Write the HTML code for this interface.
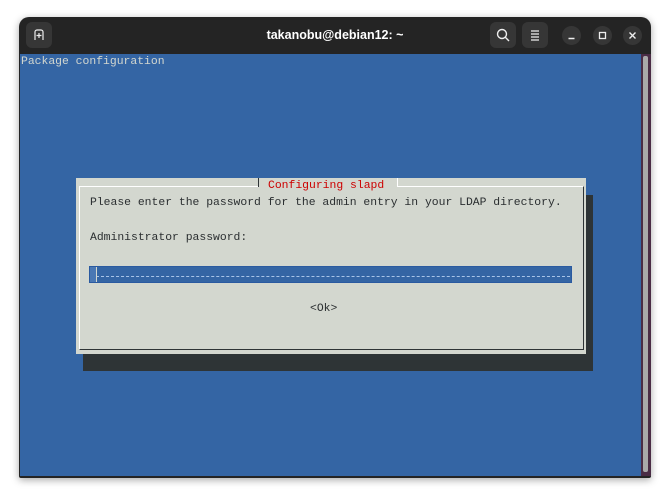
<!DOCTYPE html>
<html><head><style>
body{margin:0;width:670px;height:500px;background:#fff;position:relative;overflow:hidden;font-family:"Liberation Mono",monospace}
.win{position:absolute;left:19px;top:17px;width:632px;height:461px;background:#242424;border-radius:10px 10px 2px 2px;box-shadow:0 2px 8px rgba(0,0,0,.35);overflow:hidden}
.title{position:absolute;left:0;right:0;top:0;height:37px;color:#fff;font:bold 12.5px "Liberation Sans",sans-serif;text-align:center;line-height:37px}
.btn{position:absolute;top:5px;width:26px;height:26px;border-radius:6px;background:#363636}
.cb{position:absolute;top:9px;width:19px;height:19px;border-radius:50%;background:#363636}
.term{position:absolute;left:1px;top:37px;width:621px;height:422px;background:#3465a4}
.sb{position:absolute;left:622px;top:37px;width:10px;height:422px;background:#4a2c45}
.sb div{position:absolute;left:2px;top:2px;width:5px;bottom:4px;background:#a9a9a9;border-radius:2px}
.t{position:absolute;font-size:11.4px;line-height:14px;white-space:pre;color:#2a2e30}
</style></head><body>
<div class="win">
 <div class="title">takanobu@debian12: ~</div>
 <div class="btn" style="left:7px"><svg width="26" height="26"><path d="M9 18V10a2 2 0 0 1 2-2h4a2 2 0 0 1 2 2v8M13 11v5M10.5 13.5h5" stroke="#eee" stroke-width="1.2" fill="none"/></svg></div>
 <div class="btn" style="left:471px"><svg width="26" height="26"><circle cx="12" cy="12" r="4.5" stroke="#eee" stroke-width="1.4" fill="none"/><path d="M15.3 15.3L19 19" stroke="#eee" stroke-width="1.4"/></svg></div>
 <div class="btn" style="left:503px"><svg width="26" height="26"><path d="M9 9h8M9 12h8M9 15h8M9 18h8" stroke="#eee" stroke-width="1.3"/></svg></div>
 <div class="cb" style="left:543px"><svg width="19" height="19"><path d="M6.5 12.5h6" stroke="#eee" stroke-width="1.4"/></svg></div>
 <div class="cb" style="left:574px"><svg width="19" height="19"><rect x="6.5" y="6.5" width="6" height="6" stroke="#eee" stroke-width="1.3" fill="none"/></svg></div>
 <div class="cb" style="left:604px"><svg width="19" height="19"><path d="M6.5 6.5l6 6M12.5 6.5l-6 6" stroke="#eee" stroke-width="1.4"/></svg></div>
 <div class="term"></div>
 <div class="sb"><div></div></div>
</div>
<div class="t" style="left:21px;top:55px;color:#d3d7cf">Package configuration</div>
<div style="position:absolute;left:83px;top:195px;width:510px;height:176px;background:#2e3436"></div>
<div style="position:absolute;left:76px;top:178px;width:510px;height:176px;background:#d3d7cf"></div>
<div style="position:absolute;left:79px;top:186px;width:503px;height:162px;border-top:1px solid #fff;border-left:1px solid #fff;border-right:1px solid #2e3436;border-bottom:1px solid #2e3436"></div>
<div style="position:absolute;left:258px;top:178px;width:138px;height:9px;background:#d3d7cf;border-left:1px solid #2e3436;border-right:1px solid #fff"></div>
<div class="t" style="left:268px;top:179px;color:#cc0000">Configuring slapd</div>
<div class="t" style="left:90px;top:196px">Please enter the password for the admin entry in your LDAP directory.</div>
<div class="t" style="left:90px;top:231px">Administrator password:</div>
<div style="position:absolute;left:89px;top:266px;width:483px;height:17px;background:#3465a4;border:1px solid #2a5aa0;box-sizing:border-box"></div>
<div style="position:absolute;left:96px;top:276px;width:474px;border-top:1px dashed #a8c4e8"></div>
<div style="position:absolute;left:90px;top:267px;width:6px;height:15px;background:#4a78b4;border-right:1px solid #d3d7cf"></div>
<div class="t" style="left:310px;top:302px">&lt;Ok&gt;</div>
</body></html>
